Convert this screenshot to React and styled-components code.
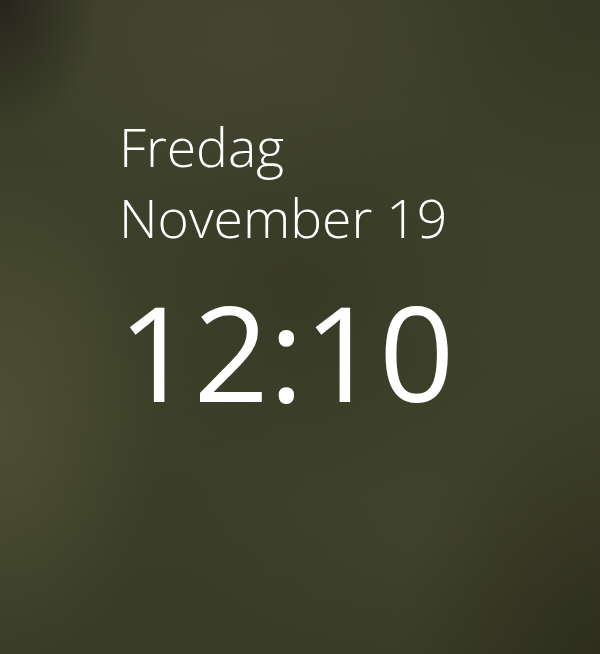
import React from "react";
import styled, { createGlobalStyle } from "styled-components";

const Global = createGlobalStyle`
  html, body { margin: 0; padding: 0; height: 100%; }
  body { background: #3b3e28; }
  #root { height: 100%; }
`;

const Screen = styled.main`
  width: 600px;
  height: 654px;
  box-sizing: border-box;
  overflow: hidden;
  padding: 111px 0 0 119px;
  font-family: "Open Sans", "Noto Sans", sans-serif;
  color: #ffffff;
  background:
    radial-gradient(ellipse 100px 140px at 0% 0%, rgba(30, 28, 24, 0.75), rgba(30, 28, 24, 0) 100%),
    radial-gradient(ellipse 200px 260px at 100% 100%, rgba(40, 40, 26, 0.7), rgba(40, 40, 26, 0) 100%),
    radial-gradient(ellipse 200px 200px at 100% 0%, rgba(44, 48, 30, 0.5), rgba(44, 48, 30, 0) 100%),
    radial-gradient(ellipse 160px 260px at 0% 65%, rgba(80, 82, 55, 0.8), rgba(80, 82, 55, 0) 100%),
    radial-gradient(ellipse 260px 180px at 40% 5%, rgba(72, 72, 52, 0.7), rgba(72, 72, 52, 0) 100%),
    radial-gradient(ellipse 220px 200px at 50% 45%, rgba(52, 54, 36, 0.7), rgba(52, 54, 36, 0) 100%),
    radial-gradient(ellipse 240px 160px at 70% 80%, rgba(68, 70, 46, 0.6), rgba(68, 70, 46, 0) 100%),
    linear-gradient(180deg, #3c3f29 0%, #3f422a 50%, #383b25 100%);
`;

const DateBlock = styled.div`
  display: flex;
  flex-direction: column;
`;

const DateLine = styled.div`
  font-size: 53.5px;
  font-weight: 300;
  line-height: 71px;
  white-space: nowrap;
`;

const Time = styled.div`
  margin-top: 18px;
  margin-left: -1px;
  font-size: 132px;
  font-weight: 400;
  line-height: 160px;
  white-space: nowrap;
`;

export default function App() {
  return (
    <>
      <Global />
      <Screen>
        <DateBlock>
          <DateLine>Fredag</DateLine>
          <DateLine>November 19</DateLine>
        </DateBlock>
        <Time>12:10</Time>
      </Screen>
    </>
  );
}
